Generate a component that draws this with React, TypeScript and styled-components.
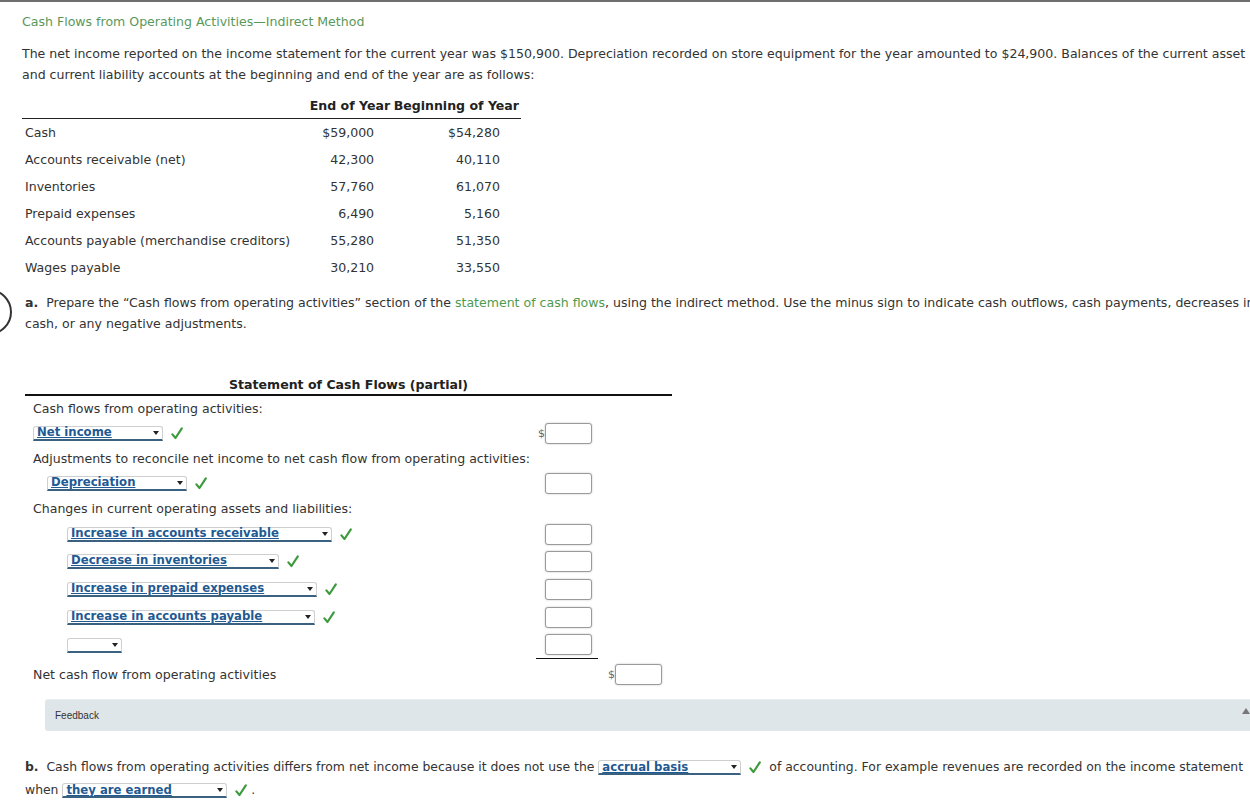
import React from 'react';
import styled, { createGlobalStyle } from 'styled-components';

const GlobalStyle = createGlobalStyle`
  html, body {
    margin: 0;
    padding: 0;
    background: #fff;
    overflow: hidden;
  }
  body {
    font-family: "DejaVu Sans", Verdana, sans-serif;
    font-size: 12.55px;
    color: #333;
  }
`;

const balances = [
  { label: 'Cash', end: '$59,000', begin: '$54,280' },
  { label: 'Accounts receivable (net)', end: '42,300', begin: '40,110' },
  { label: 'Inventories', end: '57,760', begin: '61,070' },
  { label: 'Prepaid expenses', end: '6,490', begin: '5,160' },
  { label: 'Accounts payable (merchandise creditors)', end: '55,280', begin: '51,350' },
  { label: 'Wages payable', end: '30,210', begin: '33,550' },
];

const Check = () => (
  <CheckMark viewBox="0 0 12 13" aria-hidden="true">
    <path d="M1.4 7.4 L4.5 11 L10.8 1.4" fill="none" stroke="#3d9a3d" strokeWidth="2.2" strokeLinecap="round" strokeLinejoin="round" />
  </CheckMark>
);

const Dropdown = ({ value, width }: { value?: string; width: number }) => (
  <Select $w={width}>
    <SelectText>{value}</SelectText>
    <Arrow />
  </Select>
);

type RowProps = {
  h: number;
  indent?: number;
  children?: React.ReactNode;
  first?: boolean;
  second?: boolean;
  underline?: boolean;
  dollar?: boolean;
};

const StatementRow = ({ h, indent = 0, children, first, second, underline, dollar }: RowProps) => (
  <Row $h={h}>
    <LabelCell $indent={indent}>{children}</LabelCell>
    <AmountCell $underline={underline}>
      {first && (
        <>
          <Dollar $w={9}>{dollar ? '$' : ''}</Dollar>
          <AmountInput />
        </>
      )}
    </AmountCell>
    <AmountCell2>
      {second && (
        <>
          <Dollar $w={17}>$</Dollar>
          <AmountInput />
        </>
      )}
    </AmountCell2>
  </Row>
);

const App = () => {
  return (
    <>
      <GlobalStyle />
      <TopRule />
      <Page>
        <Title>Cash Flows from Operating Activities—Indirect Method</Title>
        <Intro>
          The net income reported on the income statement for the current year was $150,900. Depreciation recorded on store equipment for the year amounted to $24,900. Balances of the current asset
          <br />
          and current liability accounts at the beginning and end of the year are as follows:
        </Intro>

        <Balances>
          <thead>
            <tr>
              <HeadCell $w={278} />
              <HeadCell $w={95} $pr={3}>End of Year</HeadCell>
              <HeadCell $w={126} $pr={2}>Beginning of Year</HeadCell>
            </tr>
          </thead>
          <tbody>
            {balances.map((b) => (
              <tr key={b.label}>
                <NameCell>{b.label}</NameCell>
                <ValueCell $pr={19}>{b.end}</ValueCell>
                <ValueCell $pr={21}>{b.begin}</ValueCell>
              </tr>
            ))}
          </tbody>
        </Balances>

        <PartA>
          <Marker />
          <b>a.</b>&nbsp; Prepare the “Cash flows from operating activities” section of the <Link>statement of cash flows</Link>, using the indirect method. Use the minus sign to indicate cash outflows, cash payments, decreases in
          <br />
          cash, or any negative adjustments.
        </PartA>

        <Statement>
          <StatementTitle>Statement of Cash Flows (partial)</StatementTitle>
          <StatementRow h={25}>Cash flows from operating activities:</StatementRow>
          <StatementRow h={24} first dollar>
            <Dropdown value="Net income" width={130} />
            <Check />
          </StatementRow>
          <StatementRow h={26}>Adjustments to reconcile net income to net cash flow from operating activities:</StatementRow>
          <StatementRow h={24} indent={14} first>
            <Dropdown value="Depreciation" width={140} />
            <Check />
          </StatementRow>
          <StatementRow h={26}>Changes in current operating assets and liabilities:</StatementRow>
          <StatementRow h={26} indent={34} first>
            <Dropdown value="Increase in accounts receivable" width={265} />
            <Check />
          </StatementRow>
          <StatementRow h={28} indent={34} first>
            <Dropdown value="Decrease in inventories" width={212} />
            <Check />
          </StatementRow>
          <StatementRow h={28} indent={34} first>
            <Dropdown value="Increase in prepaid expenses" width={250} />
            <Check />
          </StatementRow>
          <StatementRow h={28} indent={34} first>
            <Dropdown value="Increase in accounts payable" width={248} />
            <Check />
          </StatementRow>
          <StatementRow h={28} indent={34} first underline>
            <Dropdown width={55} />
          </StatementRow>
          <StatementRow h={31} second>Net cash flow from operating activities</StatementRow>
        </Statement>

        <Feedback>
          <FeedbackLabel>Feedback</FeedbackLabel>
          <FeedbackToggle />
        </Feedback>

        <PartB>
          <Line>
            <b>b.</b>&nbsp; Cash flows from operating activities differs from net income because it does not use the{' '}
            <Dropdown value="accrual basis" width={143} />
            <InlineCheck><Check /></InlineCheck>
            <Tail>of accounting. For example revenues are recorded on the income statement</Tail>
          </Line>
          <Line>
            when{' '}
            <Dropdown value="they are earned" width={165} />
            <InlineCheck><Check /></InlineCheck>
            &nbsp;.
          </Line>
        </PartB>
      </Page>
    </>
  );
};

export default App;

const TopRule = styled.div`
  border-top: 2px solid #6e6e6e;
`;

const Page = styled.div`
  padding-left: 22px;
  width: 1300px;
  white-space: nowrap;
`;

const Title = styled.div`
  margin-top: 11px;
  line-height: 18px;
  color: #5a985a;
`;

const Intro = styled.p`
  margin: 12px 0 0;
  line-height: 21px;
`;

const Balances = styled.table`
  margin-top: 7px;
  border-collapse: collapse;
  width: 499px;
`;

const HeadCell = styled.th<{ $w: number; $pr?: number }>`
  width: ${({ $w }) => $w}px;
  height: 26px;
  padding: 0 ${({ $pr }) => $pr ?? 0}px 0 0;
  text-align: right;
  font-weight: bold;
  color: #222;
  border-bottom: 1px solid #222;
`;

const NameCell = styled.td`
  height: 27px;
  padding: 0 0 0 3px;
`;

const ValueCell = styled.td<{ $pr: number }>`
  height: 27px;
  padding: 0 ${({ $pr }) => $pr}px 0 0;
  text-align: right;
`;

const PartA = styled.p`
  position: relative;
  margin: 11px 0 0 3px;
  line-height: 21px;
`;

const Marker = styled.span`
  position: absolute;
  left: -59px;
  top: -3px;
  width: 42px;
  height: 42px;
  border: 2px solid #333;
  border-radius: 50%;
`;

const Link = styled.span`
  color: #4f9a4f;
`;

const Statement = styled.div`
  margin: 42px 0 0 3px;
  width: 647px;
`;

const StatementTitle = styled.div`
  line-height: 18px;
  text-align: center;
  font-weight: bold;
  color: #222;
  border-bottom: 2px solid #111;
`;

const Row = styled.div<{ $h: number }>`
  display: flex;
  align-items: center;
  height: ${({ $h }) => $h}px;
`;

const LabelCell = styled.div<{ $indent: number }>`
  display: flex;
  align-items: center;
  gap: 8px;
  width: 511px;
  padding-left: ${({ $indent }) => 8 + $indent}px;
  box-sizing: border-box;
`;

const AmountCell = styled.div<{ $underline?: boolean }>`
  display: flex;
  align-items: center;
  width: 62px;
  height: 100%;
  padding-right: 6px;
  box-sizing: border-box;
  border-bottom: ${({ $underline }) => ($underline ? '1px solid #111' : 'none')};
`;

const AmountCell2 = styled.div`
  display: flex;
  align-items: center;
  width: 64px;
`;

const Dollar = styled.span<{ $w: number }>`
  width: ${({ $w }) => $w}px;
  text-align: right;
  font-size: 11px;
  color: #666;
`;

const AmountInput = styled.div`
  width: 47px;
  height: 21px;
  box-sizing: border-box;
  border: 1px solid #9a9a9a;
  border-radius: 3px;
  background: #fff;
  box-shadow: 0 0 2px rgba(0, 0, 0, 0.25);
`;

const Select = styled.span<{ $w: number }>`
  position: relative;
  display: inline-flex;
  align-items: center;
  width: ${({ $w }) => $w}px;
  height: 15px;
  box-sizing: border-box;
  border: 1px solid #cfcfcf;
  border-bottom: 2px solid #3a617f;
  border-radius: 3px 3px 0 0;
  background: #fff;
  vertical-align: middle;
`;

const SelectText = styled.span`
  padding-left: 3px;
  font-weight: bold;
  font-size: 11.7px;
  line-height: 13px;
  color: #1f5a93;
  text-decoration: underline;
`;

const Arrow = styled.span`
  position: absolute;
  right: 3px;
  top: 4px;
  width: 0;
  height: 0;
  border-left: 3px solid transparent;
  border-right: 3px solid transparent;
  border-top: 4px solid #222;
`;

const CheckMark = styled.svg`
  width: 12px;
  height: 13px;
  vertical-align: middle;
`;

const InlineCheck = styled.span`
  margin-left: 8px;
`;

const Tail = styled.span`
  margin-left: 8px;
`;

const Feedback = styled.div`
  position: relative;
  margin: 9px 0 0 23px;
  width: 1230px;
  height: 31px;
  display: flex;
  align-items: center;
  background: #dfe6e9;
  border-top: 1px solid #e9eef0;
  border-radius: 3px;
`;

const FeedbackLabel = styled.span`
  padding-left: 10px;
  font-family: "Liberation Sans", Arial, sans-serif;
  font-size: 10px;
  color: #333;
`;

const FeedbackToggle = styled.span`
  position: absolute;
  left: 1197px;
  top: 8px;
  width: 0;
  height: 0;
  border-left: 4px solid transparent;
  border-right: 4px solid transparent;
  border-bottom: 6px solid #777;
`;

const PartB = styled.div`
  margin: 24px 0 0 3px;
  font-size: 12.4px;
`;

const Line = styled.div`
  line-height: 23px;
  height: 23px;
`;
